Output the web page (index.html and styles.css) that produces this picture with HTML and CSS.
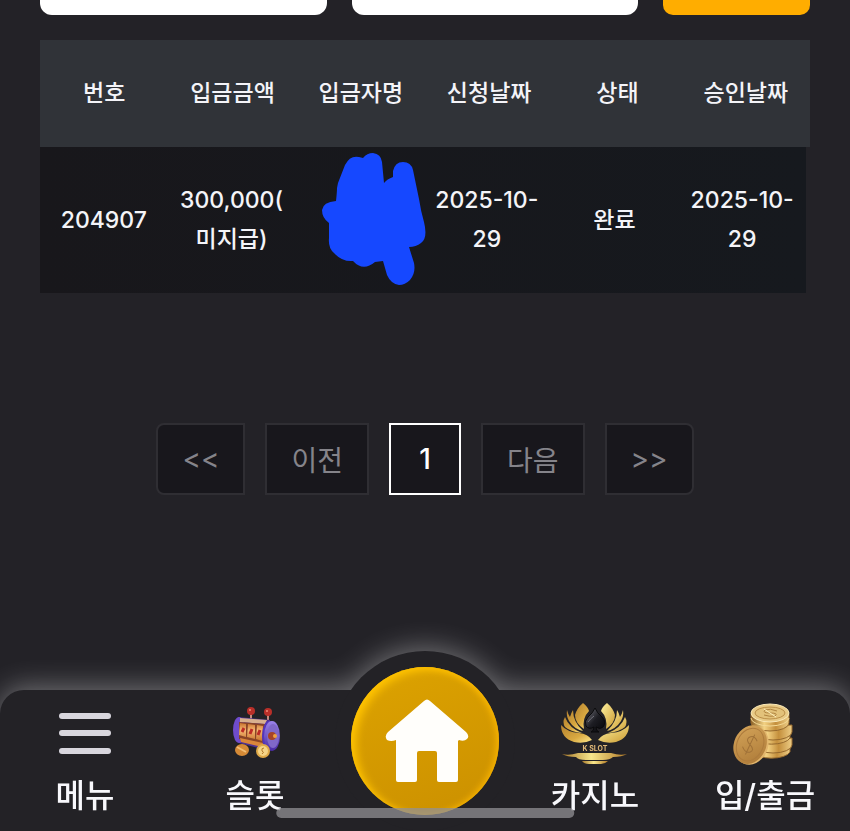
FILE: index.html
```html
<!DOCTYPE html>
<html lang="ko">

<head>
    <meta charset="UTF-8">
    <meta name="viewport" content="width=device-width, initial-scale=1.0">
    <title>입금 내역</title>
    <link rel="stylesheet" href="styles.css">
</head>

<body>
    <main class="page">
        <form class="search-form">
            <input class="search-date" type="text" aria-label="시작일">
            <input class="search-date" type="text" aria-label="종료일">
            <button class="search-btn" type="submit" aria-label="검색"></button>
        </form>

        <table class="history-table">
            <thead>
                <tr>
                    <th>번호</th>
                    <th>입금금액</th>
                    <th>입금자명</th>
                    <th>신청날짜</th>
                    <th>상태</th>
                    <th>승인날짜</th>
                </tr>
            </thead>
            <tbody>
                <tr>
                    <td>204907</td>
                    <td>300,000(<br>미지급)</td>
                    <td class="name-cell">
                        <svg class="name-mask" viewBox="0 0 104 134" aria-hidden="true">
                            <path fill="#1648ff" d="M16 31 L23 13 Q28 3 37 5 L41 6 Q45 1 51 1 Q59 2 60 10 L62 31 Q65 27 71 25 V19 Q73 10 81 10 Q89 10 91 18 L97 47 Q99 60 102 70 Q106 86 99 91 Q94 95 87 95 L92 111 Q94 121 88 128 Q83 133 77 133 Q69 132 65 123 L61 109 L53 110 Q41 120 31 109 Q20 110 12 101 Q6 96 7 86 V71 Q0 66 0 58 Q1 50 14 49 Q15 40 15 36 Z" />
                        </svg>
                    </td>
                    <td>2025-10-29</td>
                    <td>완료</td>
                    <td>2025-10-29</td>
                </tr>
            </tbody>
        </table>

        <div class="pagination">
            <button class="page-btn first" type="button">&lt;&lt;</button>
            <button class="page-btn" type="button">이전</button>
            <button class="page-btn active" type="button">1</button>
            <button class="page-btn" type="button">다음</button>
            <button class="page-btn last" type="button">&gt;&gt;</button>
        </div>
    </main>

    <nav class="bottom-nav">
        <a class="nav-item" href="#menu">
            <svg class="nav-icon" viewBox="0 0 52 64" aria-hidden="true">
                <g fill="#d8d6dd">
                    <rect y="12" width="52" height="6" rx="3" />
                    <rect y="29" width="52" height="6" rx="3" />
                    <rect y="47" width="52" height="6" rx="3" />
                </g>
            </svg>
            <span>메뉴</span>
        </a>

        <a class="nav-item" href="#slot">
            <svg class="nav-icon" viewBox="0 0 60 64" aria-hidden="true">
                <defs>
                    <linearGradient id="drum" x1="0" y1="0" x2="0" y2="1">
                        <stop offset="0" stop-color="#9a83e8" />
                        <stop offset="1" stop-color="#4a2aa5" />
                    </linearGradient>
                    <linearGradient id="reel" x1="0" y1="0" x2="0" y2="1">
                        <stop offset="0" stop-color="#c9722e" />
                        <stop offset="0.4" stop-color="#f4b873" />
                        <stop offset="1" stop-color="#c9742d" />
                    </linearGradient>
                </defs>
                <path d="M26 12 V19 M43 13 V21" stroke="#c58b80" stroke-width="2" />
                <circle cx="26" cy="10" r="4" fill="#b92f29" />
                <circle cx="43" cy="11" r="4" fill="#b92f29" />
                <circle cx="25" cy="9" r="1" fill="#f08a76" />
                <circle cx="42" cy="10" r="1" fill="#f08a76" />
                <path d="M13 16 L45 19 V50 L14 42 Z" fill="#4f3192" />
                <ellipse cx="14" cy="29" rx="6" ry="13" fill="#6f4ccb" />
                <path d="M15 17 L42 19 L40 23 L15 21 Z" fill="#d8b08f" />
                <path d="M14 21 L40 23 L38 44 L14 38 Z" fill="#8a4426" />
                <path d="M15 22 L21 23 V36 L14 34 Z M23 23 L30 24 V38 L22 36 Z M32 24 L38 25 L37 40 L31 38 Z" fill="url(#reel)" />
                <path d="M19 27 L17 31 M27 28 L25 33 M35 29 L33 34" fill="none" stroke="#bd2c25" stroke-width="3" />
                <path d="M15 37 L38 42 L37 46 L16 41 Z" fill="#da863a" />
                <ellipse cx="44" cy="35" rx="7" ry="15" fill="#5335bc" />
                <ellipse cx="47" cy="35" rx="8" ry="15" fill="url(#drum)" />
                <ellipse cx="48" cy="35" rx="6" ry="12" fill="#8068c8" />
                <ellipse cx="47" cy="35" rx="4" ry="4" fill="#a64328" />
                <circle cx="50" cy="35" r="2" fill="#efa141" />
                <ellipse cx="17" cy="49" rx="7" ry="6" fill="#d58a36" />
                <path d="M12 46 L21 51" stroke="#f2bd73" stroke-width="2" />
                <circle cx="38" cy="50" r="7" fill="#e0aa48" />
                <circle cx="38" cy="50" r="5" fill="#f6d587" />
                <path d="M39 47 Q36 47 37 50 Q40 51 37 53" fill="none" stroke="#b47a28" />
            </svg>
            <span>슬롯</span>
        </a>

        <a class="nav-item nav-home" href="#home" aria-label="홈">
            <span class="home-ring">
                <span class="home-circle">
                    <svg class="home-icon" viewBox="0 0 90 84" aria-hidden="true">
                        <path fill="#fffefb" d="M44 2 Q47 -1 50 2 L86 33 Q90 37 87 40 Q84 43 79 41 L78 42 V81 Q78 83 76 83 H59 Q57 83 57 81 V54 Q57 52 55 52 H39 Q37 52 37 54 V81 Q37 83 35 83 H18 Q16 83 16 81 V41 Q11 43 7 41 Q4 37 8 33 Z" />
                    </svg>
                </span>
            </span>
        </a>

        <a class="nav-item" href="#casino">
            <svg class="nav-icon" viewBox="0 0 80 64" aria-hidden="true">
                <defs>
                    <linearGradient id="petalLeft" x1="0" y1="0" x2="1" y2="1">
                        <stop offset="0" stop-color="#b5822e" />
                        <stop offset="0.6" stop-color="#d9a941" />
                        <stop offset="1" stop-color="#ffe98c" />
                    </linearGradient>
                    <linearGradient id="petalRight" x1="0" y1="0" x2="1" y2="1">
                        <stop offset="0" stop-color="#fff3a0" />
                        <stop offset="1" stop-color="#cb9a31" />
                    </linearGradient>
                    <linearGradient id="base">
                        <stop offset="0" stop-color="#a8792a" />
                        <stop offset="0.45" stop-color="#f7e68b" />
                        <stop offset="1" stop-color="#b27a26" />
                    </linearGradient>
                    <linearGradient id="spade" x1="0" y1="0" x2="1" y2="1">
                        <stop offset="0" stop-color="#77777f" />
                        <stop offset="0.5" stop-color="#1d1d23" />
                        <stop offset="1" stop-color="#050507" />
                    </linearGradient>
                </defs>
                <g fill="url(#petalLeft)">
                    <path d="M28 2 Q33 6 34 10 Q27 17 29 28 Q20 22 20 14 Q22 7 28 2 Z" />
                    <path d="M18 9 Q18 21 28 30 Q19 28 14 20 Q11 15 12 9 Q13 13 15 16 Q16 12 18 9 Z" />
                    <path d="M10 16 Q14 27 27 32 Q16 31 10 26 Q7 21 10 16 Z" />
                    <path d="M6 24 Q12 31 24 32 Q33 33 37 39 Q29 43 19 41 Q6 37 6 24 Z" />
                </g>
                <g fill="url(#petalRight)">
                    <path d="M52 2 Q47 6 46 10 Q53 17 51 28 Q60 22 60 14 Q58 7 52 2 Z" />
                    <path d="M62 9 Q62 21 52 30 Q61 28 66 20 Q69 15 68 9 Q67 13 65 16 Q64 12 62 9 Z" />
                    <path d="M70 16 Q66 27 53 32 Q64 31 70 26 Q73 21 70 16 Z" />
                    <path d="M74 24 Q68 31 56 32 Q47 33 43 39 Q51 43 61 41 Q74 37 74 24 Z" />
                </g>
                <path d="M40 7 Q42 12 47 16 Q52 21 48 26 Q45 29 41 26 Q41 30 44 31 H36 Q39 30 39 26 Q34 29 31 25 Q29 20 33 16 Q38 12 40 7 Z" fill="url(#spade)" stroke="#09090b" />
                <path d="M33 21 Q35 18 39 15" fill="none" stroke="#73737c" />
                <text class="casino-mark" x="40" y="50" text-anchor="middle">K SLOT</text>
                <g fill="url(#base)">
                    <path d="M7 53 Q14 55 23 52 H56 Q65 55 72 53 Q67 56 58 56 Q55 59 48 59 H31 Q23 59 21 56 Q12 56 7 53 Z" />
                    <path d="M27 60 H53 Q50 63 46 63 H34 Q29 63 27 60 Z" />
                </g>
            </svg>
            <span>카지노</span>
        </a>

        <a class="nav-item" href="#cash">
            <svg class="nav-icon" viewBox="0 0 64 64" aria-hidden="true">
                <defs>
                    <linearGradient id="coinSide">
                        <stop offset="0" stop-color="#8c6228" />
                        <stop offset="0.35" stop-color="#f3d283" />
                        <stop offset="0.65" stop-color="#c48f3c" />
                        <stop offset="1" stop-color="#edcd86" />
                    </linearGradient>
                    <linearGradient id="coinFace" x1="0" y1="0" x2="1" y2="1">
                        <stop offset="0" stop-color="#d6a65b" />
                        <stop offset="1" stop-color="#ab7836" />
                    </linearGradient>
                </defs>
                <g fill="url(#coinSide)" stroke="#96692d">
                    <path d="M20 46 V51 A19 8 0 0 0 57 51 V46 Z" />
                    <path d="M21 39 V44 A19 8 0 0 0 59 44 V37 Z" />
                    <path d="M20 32 V37 A19 8 0 0 0 57 37 V31 Z" />
                    <path d="M21 25 V31 A19 8 0 0 0 59 31 V24 Z" />
                    <path d="M18 13 V22 A19 8 0 0 0 56 22 V13 Z" />
                </g>
                <path d="M18 17 A19 8 0 0 0 56 17" fill="none" stroke="#f4da96" />
                <ellipse cx="37" cy="12" rx="19" ry="9" fill="#e9cb87" stroke="#fae9b8" />
                <ellipse cx="37" cy="12" rx="15" ry="6" fill="#e3c27a" stroke="#bb8f48" />
                <path d="M44 10 Q37 7 32 9 Q29 12 37 12 Q46 12 42 15 Q37 16 31 14" fill="none" stroke="#b08440" />
                <path d="M31 8 L43 16" fill="none" stroke="#fff0bd" />
                <g transform="rotate(25 18 44)">
                    <ellipse cx="19" cy="44" rx="16" ry="20" fill="#e1b56c" />
                    <ellipse cx="17" cy="44" rx="16" ry="20" fill="url(#coinFace)" />
                    <ellipse cx="17" cy="44" rx="13" ry="17" fill="none" stroke="#ad7b3d" />
                    <path d="M22 38 Q17 33 13 38 Q11 42 17 44 Q24 47 20 51 Q16 54 11 49 M17 33 V55" fill="none" stroke="#a07238" />
                </g>
            </svg>
            <span>입/출금</span>
        </a>
    </nav>

    <div class="home-indicator"></div>
</body>

</html>
```
FILE: styles.css
```css
* {
    box-sizing: border-box;
}

body {
    margin: 0;
    min-height: 100vh;
    background: #232227;
    color: #f4f4f8;
    font-family: Inter, "Noto Sans CJK KR", sans-serif;
    font-optical-sizing: none;
    overflow-x: hidden;
}

.page {
    padding: 0 40px 160px;
}

.search-form {
    display: grid;
    grid-template-columns: 1fr 1fr 147px;
    gap: 25px;
    margin-bottom: 25px;
}

.search-date,
.search-btn {
    width: 100%;
    height: 15px;
    padding: 0;
    border: 0;
    border-radius: 0 0 12px 12px;
    background: #fff;
}

.search-btn {
    border-radius: 0 0 10px 10px;
    background: #ffad00;
    cursor: pointer;
}

/* table */
.history-table,
.history-table thead,
.history-table tbody {
    display: block;
}

.history-table tbody {
    margin-right: 4px;
}

.history-table tr {
    display: grid;
    grid-template-columns: repeat(6, 1fr);
    align-items: center;
}

.history-table th,
.history-table td {
    padding: 34px 6px;
    font-size: 23px;
    font-weight: 500;
    line-height: 39px;
    text-align: center;
}

.history-table th {
    padding: 34px 0;
}

.history-table thead {
    background: #303338;
}

.history-table tbody {
    background: linear-gradient(90deg, #18171b, #16191e);
}

.history-table .name-cell {
    position: relative;
    align-self: stretch;
}

.name-mask {
    position: absolute;
    top: 5px;
    left: 27px;
    width: 104px;
    height: 134px;
}

/* pagination */
.pagination {
    display: flex;
    justify-content: center;
    gap: 20px;
    margin-top: 130px;
}

.page-btn {
    min-width: 72px;
    height: 72px;
    padding: 0 24px;
    border: 2px solid #2f2e33;
    background: #18171c;
    color: #85848a;
    font-family: inherit;
    font-size: 28px;
    cursor: pointer;
}

.page-btn.first {
    border-radius: 8px 0 0 8px;
}

.page-btn.last {
    border-radius: 0 8px 8px 0;
}

.page-btn.active {
    border-color: #fff;
    color: #fff;
    font-weight: 500;
}

/* bottom menu */
.bottom-nav {
    position: fixed;
    right: 0;
    bottom: 0;
    left: 0;
    display: grid;
    grid-template-columns: repeat(5, 1fr);
    border-radius: 24px 24px 0 0;
    background: #232226;
    filter: drop-shadow(0 -3px 14px rgba(255, 255, 255, 0.36));
}

.nav-item {
    display: flex;
    flex-direction: column;
    align-items: center;
    gap: 8px;
    padding: 11px 0 12px;
    color: #f8f8fc;
    font-size: 32px;
    font-weight: 500;
    line-height: 46px;
    text-decoration: none;
}

.nav-icon {
    height: 64px;
}

.casino-mark {
    fill: #e0b878;
    font-family: Inter, sans-serif;
    font-size: 7px;
    font-weight: 700;
}

.nav-home {
    position: relative;
}

.home-ring {
    position: absolute;
    top: -39px;
    display: grid;
    place-items: center;
    width: 180px;
    height: 180px;
    border-radius: 50%;
    background: #232226;
}

.home-circle {
    display: grid;
    place-items: center;
    width: 148px;
    height: 148px;
    border-radius: 50%;
    background: linear-gradient(160deg, #dda300, #cb9000);
    box-shadow: inset 5px 3px 8px #ffc400, inset -3px 0 6px #f5b000;
}

.home-icon {
    width: 90px;
    height: 84px;
}

.home-indicator {
    position: fixed;
    bottom: 13px;
    left: 50%;
    width: 35%;
    height: 10px;
    border-radius: 5px;
    background: rgba(145, 144, 148, 0.75);
    transform: translateX(-50%);
}
```
